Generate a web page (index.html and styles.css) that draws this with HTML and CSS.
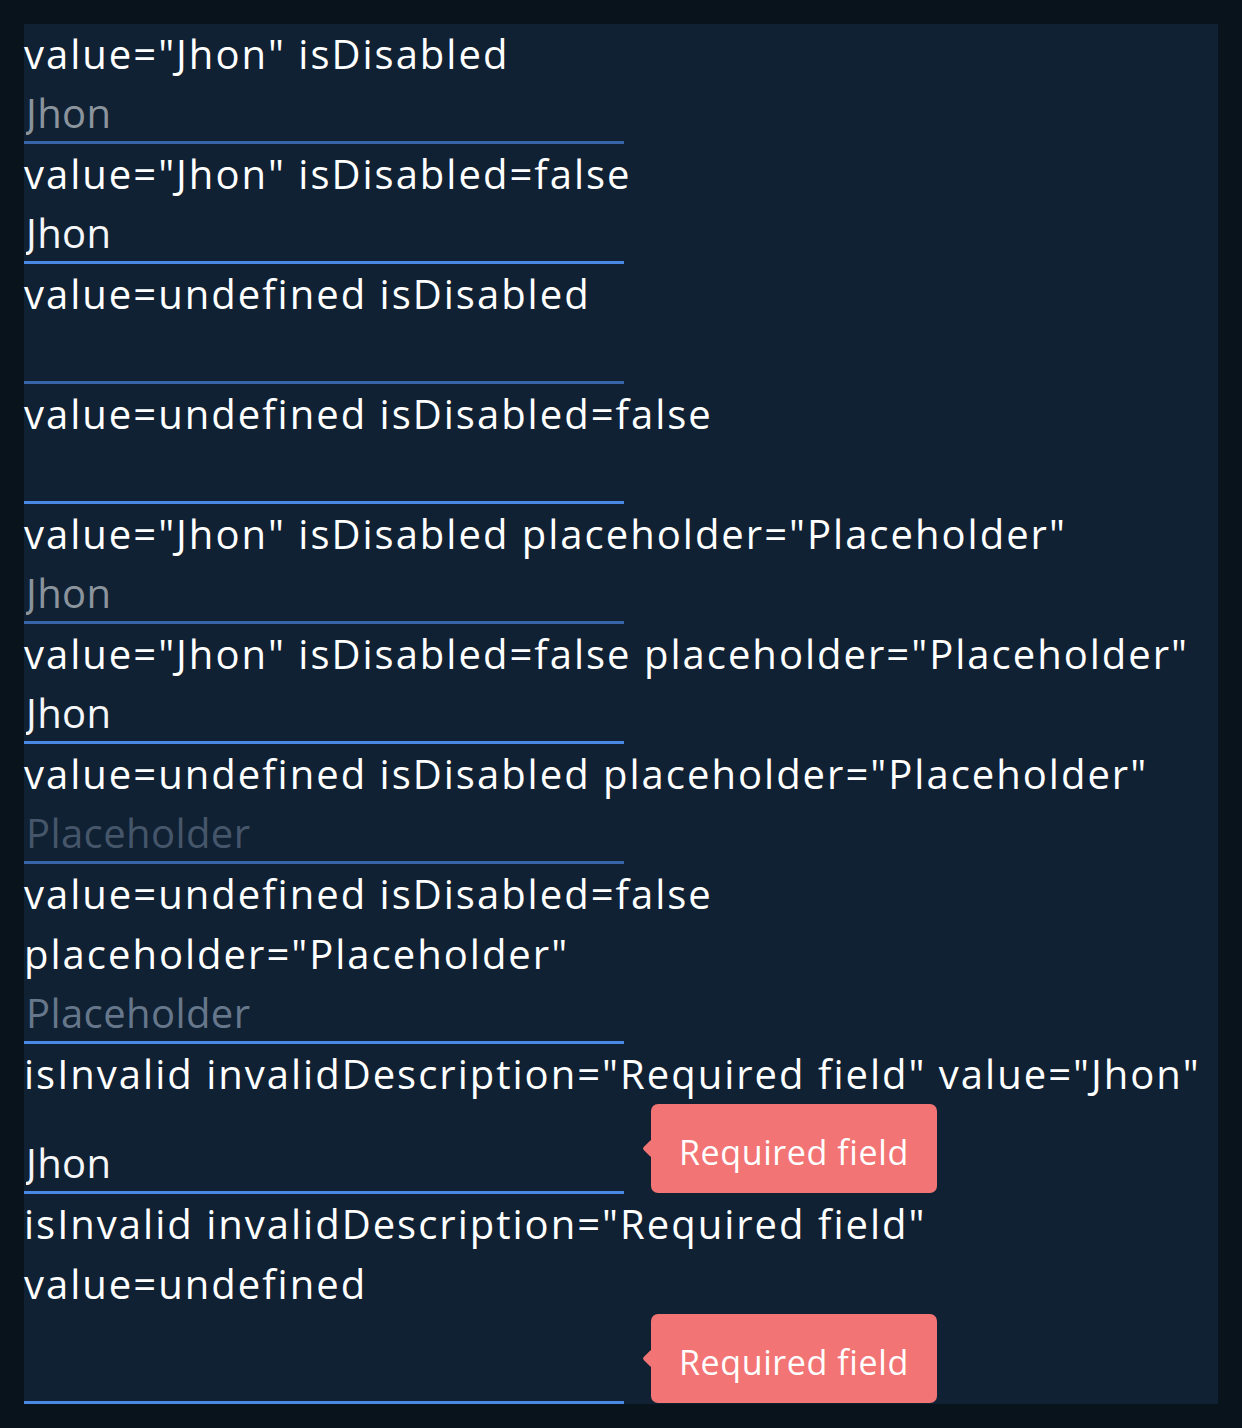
FILE: index.html
```html
<!DOCTYPE html>
<html lang="en">
<head>
<meta charset="utf-8">
<title>Input states</title>
<link rel="stylesheet" href="styles.css">
</head>
<body>
<main class="panel">
  <div class="field">
    <div class="label">value="Jhon" isDisabled</div>
    <input class="input" value="Jhon" disabled>
  </div>
  <div class="field">
    <div class="label">value="Jhon" isDisabled=false</div>
    <input class="input" value="Jhon">
  </div>
  <div class="field">
    <div class="label">value=undefined isDisabled</div>
    <input class="input" disabled>
  </div>
  <div class="field">
    <div class="label">value=undefined isDisabled=false</div>
    <input class="input">
  </div>
  <div class="field">
    <div class="label">value="Jhon" isDisabled placeholder="Placeholder"</div>
    <input class="input" value="Jhon" placeholder="Placeholder" disabled>
  </div>
  <div class="field">
    <div class="label">value="Jhon" isDisabled=false placeholder="Placeholder"</div>
    <input class="input" value="Jhon" placeholder="Placeholder">
  </div>
  <div class="field">
    <div class="label">value=undefined isDisabled placeholder="Placeholder"</div>
    <input class="input" placeholder="Placeholder" disabled>
  </div>
  <div class="field">
    <div class="label">value=undefined isDisabled=false placeholder="Placeholder"</div>
    <input class="input" placeholder="Placeholder">
  </div>
  <div class="field">
    <div class="label">isInvalid invalidDescription="Required field" value="Jhon"</div>
    <div class="control">
      <input class="input" value="Jhon">
      <div class="tooltip">Required field</div>
    </div>
  </div>
  <div class="field">
    <div class="label">isInvalid invalidDescription="Required field" value=undefined</div>
    <div class="control">
      <input class="input">
      <div class="tooltip">Required field</div>
    </div>
  </div>
</main>
</body>
</html>
```
FILE: styles.css
```css
html, body {
  margin: 0;
  padding: 0;
  background: #08131c;
}

body {
  font-family: "Open Sans", "Noto Sans", sans-serif;
  color: #ffffff;
  padding: 24px;
}

.panel {
  width: 1194px;
  background: #102133;
  display: flex;
  flex-direction: column;
}

.field {
  display: flex;
  flex-direction: column;
}

.label {
  font-size: 40px;
  line-height: 60px;
  letter-spacing: 2px;
  color: #ffffff;
}

.input {
  display: block;
  box-sizing: border-box;
  width: 600px;
  height: 60px;
  margin: 0;
  padding: 0 2px;
  border: none;
  border-bottom: 3px solid #4a88e6;
  border-radius: 0;
  background: transparent;
  font-family: inherit;
  font-size: 40px;
  letter-spacing: 0.4px;
  color: #f4f6f8;
  outline: none;
}

.input::placeholder {
  color: #66778b;
  opacity: 1;
}

.input:disabled {
  border-bottom-color: #3764a6;
  color: #8b949d;
  -webkit-text-fill-color: #8b949d;
}

.input:disabled::placeholder {
  color: #46566a;
  -webkit-text-fill-color: #46566a;
}

.control {
  display: flex;
  align-items: flex-end;
}

.tooltip {
  position: relative;
  box-sizing: border-box;
  height: 89px;
  margin-left: 27px;
  margin-bottom: 1px;
  padding: 6px 28px 0;
  display: flex;
  align-items: center;
  background: #f27474;
  border-radius: 7px;
  color: #ffffff;
  font-size: 34px;
  letter-spacing: 0.6px;
}

.tooltip::before {
  content: "";
  position: absolute;
  left: -6px;
  top: 50%;
  width: 13px;
  height: 13px;
  margin-top: -7px;
  background: #f27474;
  transform: rotate(45deg);
  border-radius: 2px;
}
```
